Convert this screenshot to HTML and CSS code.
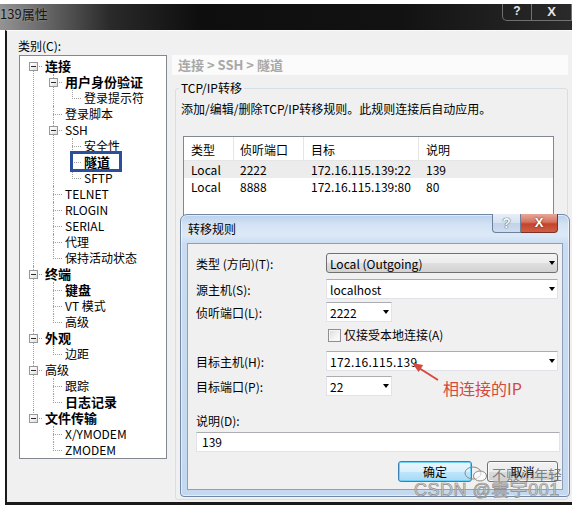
FILE: index.html
```html
<!DOCTYPE html>
<html lang="zh-CN">
<head>
<meta charset="utf-8">
<title>139属性</title>
<link rel="stylesheet" href="styles.css">
</head>
<body>
<div class="screen">
  <div class="titlebar">
    <span class="title">139属性</span>
    <div class="caption">
      <span class="cap-help">?</span>
      <span class="cap-close">X</span>
    </div>
  </div>
  <div class="frame">
    <div class="client">
      <div class="left">
        <div class="cat-label">类别(C):</div>
        <div class="treebox">
          <ul class="tree">
            <li class="first"><i class="exp"></i><div class="row b">连接</div>
              <ul>
                <li><i class="exp"></i><div class="row b">用户身份验证</div>
                  <ul><li class="last"><div class="row">登录提示符</div></li></ul>
                </li>
                <li><div class="row">登录脚本</div></li>
                <li><i class="exp"></i><div class="row">SSH</div>
                  <ul>
                    <li><div class="row">安全性</div></li>
                    <li><span class="mark"></span><div class="row b">隧道</div></li>
                    <li class="last"><div class="row">SFTP</div></li>
                  </ul>
                </li>
                <li><div class="row">TELNET</div></li>
                <li><div class="row">RLOGIN</div></li>
                <li><div class="row">SERIAL</div></li>
                <li><div class="row">代理</div></li>
                <li class="last"><div class="row">保持活动状态</div></li>
              </ul>
            </li>
            <li><i class="exp"></i><div class="row b">终端</div>
              <ul>
                <li><div class="row b">键盘</div></li>
                <li><div class="row">VT 模式</div></li>
                <li class="last"><div class="row">高级</div></li>
              </ul>
            </li>
            <li><i class="exp"></i><div class="row b">外观</div>
              <ul>
                <li class="last"><div class="row">边距</div></li>
              </ul>
            </li>
            <li><i class="exp"></i><div class="row">高级</div>
              <ul>
                <li><div class="row">跟踪</div></li>
                <li class="last"><div class="row b">日志记录</div></li>
              </ul>
            </li>
            <li class="last"><i class="exp"></i><div class="row b">文件传输</div>
              <ul>
                <li><div class="row">X/YMODEM</div></li>
                <li class="last"><div class="row">ZMODEM</div></li>
              </ul>
            </li>
          </ul>
        </div>
      </div>
      <div class="right">
        <div class="crumb">连接 &gt; SSH &gt; 隧道</div>
        <fieldset class="group">
          <legend>TCP/IP转移</legend>
          <p class="desc">添加/编辑/删除TCP/IP转移规则。此规则连接后自动应用。</p>
          <div class="list">
            <div class="lrow lhead"><span>类型</span><span>侦听端口</span><span>目标</span><span>说明</span></div>
            <div class="lrow sel"><span>Local</span><span>2222</span><span>172.16.115.139:22</span><span>139</span></div>
            <div class="lrow"><span>Local</span><span>8888</span><span>172.16.115.139:80</span><span>80</span></div>
          </div>
        </fieldset>
      </div>
    </div>
  </div>

  <div class="dialog">
    <div class="dlg-title">
      <span class="dlg-name">转移规则</span>
      <div class="dlg-caps"><span class="dlg-help">?</span><span class="dlg-close">X</span></div>
    </div>
    <div class="dlg-body">
      <div class="frow"><span class="flabel">类型 (方向)(T):</span><div class="combo ro wide">Local (Outgoing)<i class="dd"></i></div></div>
      <div class="frow r2"><span class="flabel">源主机(S):</span><div class="combo wide">localhost<i class="dd"></i></div></div>
      <div class="frow r3"><span class="flabel">侦听端口(L):</span><div class="combo small">2222<i class="dd"></i></div></div>
      <div class="checkrow"><span class="cb"></span>仅接受本地连接(A)</div>
      <div class="frow r5"><span class="flabel">目标主机(H):</span><div class="combo wide ip">172.16.115.139<i class="dd"></i></div></div>
      <div class="frow r6"><span class="flabel">目标端口(P):</span><div class="combo small">22<i class="dd"></i></div></div>
      <div class="desc-label">说明(D):</div>
      <div class="input">139</div>
      <div class="btnrow"><span class="btn default">确定</span><span class="btn">取消</span></div>
    </div>
  </div>

  <svg class="arrow" width="40" height="30" viewBox="0 0 40 30">
    <line x1="33" y1="25" x2="14" y2="13" stroke="#d5483c" stroke-width="2"/>
    <polygon points="7,8 18.2,10 13.6,17" fill="#d5483c"/>
  </svg>
  <div class="note">相连接的IP</div>

  <div class="wm wm1">
    <svg width="24" height="16" viewBox="0 0 24 16"><ellipse cx="9" cy="7" rx="8" ry="6" fill="none" stroke="#8a8a8a" stroke-width="1"/><ellipse cx="16" cy="10" rx="6.5" ry="5" fill="rgba(255,255,255,0.6)" stroke="#8a8a8a" stroke-width="1"/></svg>
    <span>不败小年轻</span>
  </div>
  <div class="wm wm2">CSDN @雲宇001</div>
</div>
</body>
</html>
```

FILE: styles.css
```css
* { box-sizing: border-box; }
html, body { margin: 0; padding: 0; }
body {
  width: 572px;
  height: 509px;
  overflow: hidden;
  background: #fff;
  font-family: "Noto Sans CJK SC", "Liberation Sans", sans-serif;
  font-size: 12px;
  color: #000;
}
.screen { position: relative; width: 572px; height: 509px; padding-top: 4px; }

/* main window title bar */
.titlebar {
  height: 26px;
  display: flex;
  justify-content: space-between;
  align-items: flex-start;
  background: linear-gradient(90deg, #949494 0px, #6c6c6c 40px, #2a2a2a 110px, #0e0e0e 200px, #121212 400px, #2a2a2a 572px);
}
.title { font-size: 13px; line-height: 18px; padding-top: 1px; color: #161616; text-shadow: 0 0 3px rgba(255,255,255,0.35); }
.caption {
  display: flex;
  height: 17px;
  border: 1px solid rgba(190,190,190,0.5);
  border-top: none;
  border-radius: 0 0 0 5px;
}
.cap-help, .cap-close {
  line-height: 15px;
  text-align: center;
  font-weight: bold;
  font-family: "Liberation Sans", sans-serif;
  color: #e6e6e6;
}
.cap-help { width: 29px; font-size: 12px; border-right: 1px solid rgba(190,190,190,0.5); }
.cap-close { width: 39px; font-size: 13px; }

/* main window client */
.frame {
  margin-left: 5px;
  height: 475px;
  border-left: 2px solid #1a1a1a;
  border-bottom: 3px solid #1a1a1a;
  border-top: 1px solid #fafafa;
  background: #f0f0f0;
}
.client { display: flex; gap: 5px; padding: 7px 0 0 12px; }
.left { width: 148px; flex: none; }
.cat-label { line-height: 16px; height: 17px; margin-left: -1px; }
.treebox { height: 404px; border: 1px solid #828790; background: #fff; }

/* tree */
.tree, .tree ul { list-style: none; margin: 0; padding: 0; }
.tree { padding: 2px 0 0 13px; }
.tree li { position: relative; padding-left: 11px; }
.tree > li > ul { margin-left: 9px; }
.tree ul ul { margin-left: 8px; }
.tree li::before {
  content: "";
  position: absolute;
  left: 0;
  top: 8px;
  width: 9px;
  border-top: 1px dotted #a0a0a0;
}
.tree li::after {
  content: "";
  position: absolute;
  left: 0;
  top: 0;
  bottom: 0;
  border-left: 1px dotted #a0a0a0;
}
.tree li.last::after { bottom: auto; height: 9px; }
.tree li.first::after { top: 8px; }
.tree .row { height: 16px; line-height: 16px; white-space: nowrap; padding-left: 1px; overflow: visible; }
.tree .row.b { font-weight: bold; font-size: 13px; }
.exp {
  position: absolute;
  left: -4px;
  top: 4px;
  width: 9px;
  height: 9px;
  border: 1px solid #979797;
  background: linear-gradient(135deg, #fff 0%, #f2f2f2 50%, #dcdcdc 100%);
  z-index: 1;
}
.exp::after {
  content: "";
  position: absolute;
  left: 1px;
  top: 3px;
  width: 5px;
  height: 1px;
  background: #2b2b2b;
}
.mark {
  position: absolute;
  left: -2px;
  top: -3px;
  width: 52px;
  height: 21px;
  border: 3px solid #2c4e9c;
  z-index: 2;
}

/* right pane */
.right { width: 396px; flex: none; padding-top: 17px; }
.crumb {
  height: 20px;
  line-height: 20px;
  padding-left: 6px;
  background: #fbfbfb;
  color: #a8a8a8;
  font-weight: bold;
  font-size: 13px;
}
.group {
  margin: 5px 0 0 3px;
  padding: 0 0 0 3px;
  width: 393px;
  min-width: 0;
  height: 420px;
  border: 1px solid #d5dfe5;
  border-radius: 3px;
}
.group legend { padding: 0 2px; line-height: 16px; font-size: 12px; }
.desc { margin: 5px 0 0 2px; line-height: 16px; white-space: nowrap; }
.list {
  margin: 19px 0 0 4px;
  width: 371px;
  height: 320px;
  border: 1px solid #828790;
  background: #fff;
}
.lrow {
  display: grid;
  grid-template-columns: 50px 70px 115px 1fr;
  height: 17px;
  line-height: 17px;
}
.lrow span { padding-left: 7px; white-space: nowrap; }
.lrow span:nth-child(2) { padding-left: 6px; }
.lhead { height: 24px; border-bottom: 1px solid #e5e5e5; }
.lhead span { line-height: 22px; padding-top: 2px; border-right: 1px solid #e5e5e5; }
.lhead span:last-child { border-right: none; }
.lrow.sel { background: #ececec; }

/* dialog */
.dialog {
  position: absolute;
  left: 180px;
  top: 214px;
  width: 390px;
  height: 283px;
  border: 1px solid #7188a6;
  border-radius: 7px 7px 4px 4px;
  background: linear-gradient(180deg, #b9d0ec 0px, #d3e2f4 9px, #dde9f7 20px, #c9dcf1 29px, #c4d8ef 100%);
  box-shadow: inset 0 0 0 1px rgba(255,255,255,0.55);
  padding: 0 6px 6px;
  display: flex;
  flex-direction: column;
}
.dlg-title { height: 28px; flex: none; display: flex; justify-content: space-between; align-items: flex-start; }
.dlg-name { line-height: 28px; padding-left: 1px; }
.dlg-caps { display: flex; margin-top: -1px; margin-right: 5px; }
.dlg-help, .dlg-close {
  height: 19px;
  line-height: 18px;
  text-align: center;
  font-family: "Liberation Sans", sans-serif;
  font-weight: bold;
}
.dlg-help {
  width: 29px;
  border: 1px solid #6e819b;
  border-top: none;
  border-radius: 0 0 0 4px;
  background: linear-gradient(180deg, #e6eef8 0%, #d6e2f0 50%, #c2d3e8 51%, #cfdcee 100%);
  color: #f4f7fb;
  font-size: 14px;
  text-shadow: 0 0 1px #3c4f68, 0 0 1px #3c4f68;
}
.dlg-close {
  width: 37px;
  border: 1px solid #7a3326;
  border-top: none;
  border-left: none;
  border-radius: 0 0 4px 0;
  background: linear-gradient(180deg, #e7a898 0%, #d6735f 45%, #c4432d 55%, #cd6046 100%);
  color: #fff;
  font-size: 13px;
  text-shadow: 0 0 2px #5a1a10;
}
.dlg-body {
  flex: 1;
  border: 1px solid #8aa0bb;
  background: #f0f0f0;
  padding: 9px 2px 0 8px;
  display: flex;
  flex-direction: column;
}
.frow { display: flex; align-items: center; height: 20px; }
.frow.r2 { margin-top: 6px; }
.frow.r3 { margin-top: 3px; }
.frow.r5 { margin-top: 9px; }
.frow.r6 { margin-top: 5px; }
.flabel { width: 130px; flex: none; white-space: nowrap; }
.combo {
  height: 20px;
  display: flex;
  align-items: center;
  padding-left: 3px;
  background: #fff;
  border: 1px solid #e2e3ea;
  border-top-color: #abadb3;
  white-space: nowrap;
}
.combo.wide { width: 232px; }
.combo.small { width: 66px; }
.combo.ro {
  border: 1px solid #707070;
  border-radius: 3px;
  background: linear-gradient(180deg, #f4f4f4 0%, #ececec 50%, #dfdfdf 51%, #d2d2d2 100%);
}
.combo.ip { letter-spacing: 0.3px; }
.dd {
  margin-left: auto;
  margin-right: 2px;
  width: 0;
  height: 0;
  border-left: 3.5px solid transparent;
  border-right: 3.5px solid transparent;
  border-top: 4px solid #000;
}
.checkrow {
  margin-top: 6px;
  height: 14px;
  line-height: 14px;
  padding-left: 132px;
  display: flex;
  align-items: center;
  white-space: nowrap;
}
.cb {
  width: 13px;
  height: 13px;
  margin-right: 3px;
  border: 1px solid #8f8f8f;
  background: linear-gradient(135deg, #d9d9d9 0%, #f4f4f4 60%, #fff 100%);
  box-shadow: inset 0 0 0 1px #f4f4f4;
}
.desc-label { margin-top: 18px; height: 14px; line-height: 14px; }
.input {
  margin-top: 4px;
  width: 364px;
  height: 20px;
  line-height: 18px;
  padding-left: 5px;
  background: #fff;
  border: 1px solid #e2e3ea;
  border-top-color: #abadb3;
}
.btnrow { margin-top: 9px; display: flex; justify-content: flex-end; gap: 15px; padding-right: 2px; }
.btn {
  width: 71px;
  height: 21px;
  line-height: 19px;
  text-align: center;
  border: 1px solid #707070;
  border-radius: 3px;
  background: linear-gradient(180deg, #f2f2f2 0%, #ebebeb 50%, #dddddd 51%, #cfcfcf 100%);
  box-shadow: inset 0 0 0 1px rgba(255,255,255,0.7);
}
.btn.default {
  width: 74px;
  border-color: #3c7fb1;
  background: linear-gradient(180deg, #eaf6fd 0%, #d9f0fc 50%, #bee6fd 51%, #a7d9f5 100%);
  box-shadow: inset 0 0 0 1px #6fd0f8;
}

/* annotations / watermarks */
.arrow { position: absolute; left: 405px; top: 355px; }
.note {
  position: absolute;
  left: 443px;
  top: 378px;
  font-size: 16px;
  line-height: 20px;
  color: #d5483c;
  white-space: nowrap;
}
.wm { position: absolute; white-space: nowrap; pointer-events: none; }
.wm1 { left: 464px; top: 466px; display: flex; align-items: center; gap: 4px; font-size: 14px; line-height: 16px; color: rgba(95,95,95,0.75); }
.wm2 {
  left: 414px;
  top: 480px;
  font-family: "Liberation Sans", "Noto Sans CJK SC", sans-serif;
  font-size: 18px;
  line-height: 20px;
  letter-spacing: 0.5px;
  color: rgba(215,215,215,0.75);
  -webkit-text-stroke: 0.7px #8c8c8c;
}
```
